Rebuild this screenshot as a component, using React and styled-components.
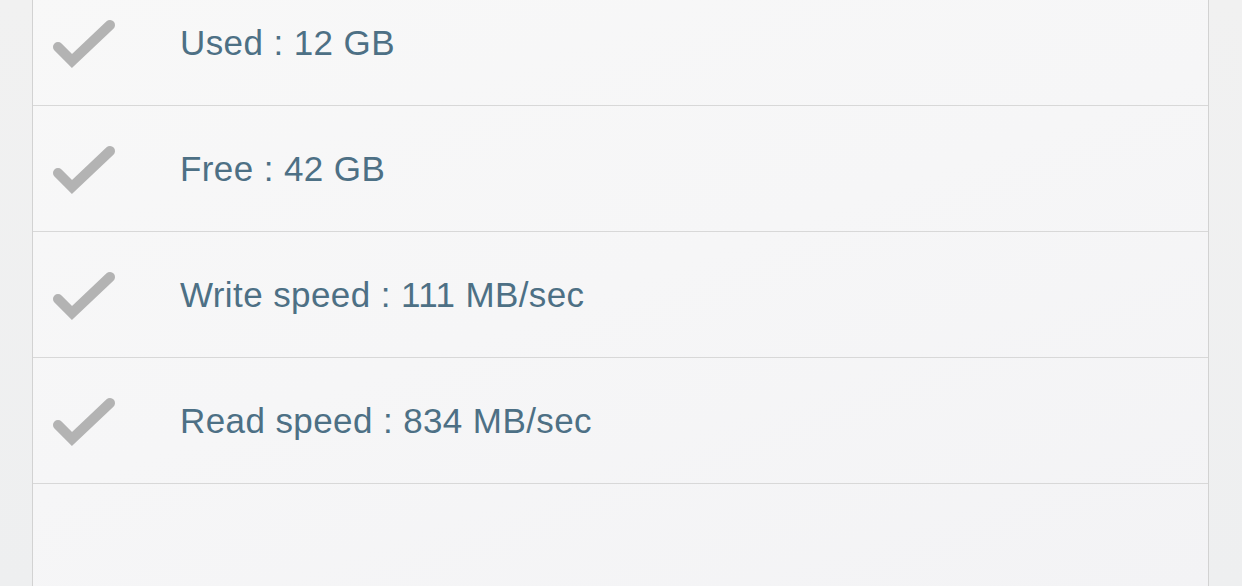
import React from 'react'
import styled, { createGlobalStyle } from 'styled-components'

const Global = createGlobalStyle`
  html, body {
    margin: 0;
    padding: 0;
    height: 100%;
    overflow: hidden;
    background: #f0f0f0;
    font-family: "Liberation Sans", Arial, sans-serif;
  }
`

const Page = styled.div`
  display: flex;
  width: 100%;
  height: 586px;
  background: linear-gradient(180deg, #f1f1f1 0%, #eeeff0 100%);
`

const Gutter = styled.div`
  width: ${p => p.w}px;
  flex-shrink: 0;
`

const Panel = styled.div`
  flex: 1;
  display: flex;
  flex-direction: column;
  margin-top: -20px;
  border-left: 1px solid #d2d2d2;
  border-right: 1px solid #d2d2d2;
  background: linear-gradient(160deg, #f8f8f8 0%, #f6f6f7 50%, #f3f3f5 100%);
`

const Row = styled.div`
  box-sizing: border-box;
  height: 126px;
  display: flex;
  align-items: center;
  gap: 64px;
  padding-left: 19px;
  border-bottom: 1px solid #d8d8d8;
`

const Label = styled.span`
  font-size: 35px;
  color: #4d7085;
  letter-spacing: 0.4px;
`

const Check = () => (
  <svg width="64" height="52" viewBox="0 0 64 52">
    <path
      d="M6 30 L20 44 L58 8"
      fill="none"
      stroke="#b3b3b3"
      strokeWidth="10"
      strokeLinecap="round"
      strokeLinejoin="miter"
    />
  </svg>
)

const items = [
  'Used : 12 GB',
  'Free : 42 GB',
  'Write speed : 111 MB/sec',
  'Read speed : 834 MB/sec',
]

export default function App() {
  return (
    <>
      <Global />
      <Page>
        <Gutter w={32} />
        <Panel>
          {items.map(t => (
            <Row key={t}>
              <Check />
              <Label>{t}</Label>
            </Row>
          ))}
        </Panel>
        <Gutter w={33} />
      </Page>
    </>
  )
}
